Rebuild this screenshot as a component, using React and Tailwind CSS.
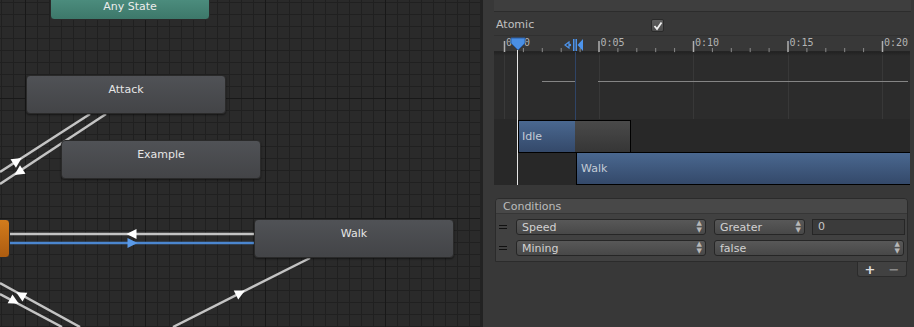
import React from 'react';

const font = { fontFamily: '"DejaVu Sans", "Liberation Sans", sans-serif' };

function arrow(cx, cy, dx, dy, s = 10) {
  const l = Math.hypot(dx, dy);
  const ux = dx / l, uy = dy / l;
  const nx = -uy, ny = ux;
  const tip = [cx + ux * s * 0.55, cy + uy * s * 0.55];
  const b1 = [cx - ux * s * 0.45 + nx * s * 0.5, cy - uy * s * 0.45 + ny * s * 0.5];
  const b2 = [cx - ux * s * 0.45 - nx * s * 0.5, cy - uy * s * 0.45 - ny * s * 0.5];
  return [tip, b1, b2].map((p) => p.join(',')).join(' ');
}

function StateNode({ name, className }) {
  return (
    <div
      className={`absolute w-[200px] h-[39px] rounded-[4px] border border-[#2a2a2a] bg-gradient-to-b from-[#505256] to-[#434447] text-center pt-[6px] text-[11px] text-[#e6e6e6] shadow-[0_1px_2px_rgba(0,0,0,0.5)] ${className}`}
    >
      {name}
    </div>
  );
}

function Canvas() {
  return (
    <div className="relative w-[480px] h-full overflow-hidden bg-[#2a2a2a]">
      {/* grid */}
      <div className="absolute inset-0 [background-image:linear-gradient(to_right,#202020_1px,transparent_1px),linear-gradient(to_bottom,#202020_1px,transparent_1px)] [background-size:12px_12px] [background-position:1px_2px]" />
      <div className="absolute inset-0 [background-image:linear-gradient(to_right,#181818_1px,transparent_1px),linear-gradient(to_bottom,#181818_1px,transparent_1px)] [background-size:120px_120px] [background-position:25px_98px]" />

      {/* transitions */}
      <svg className="absolute inset-0" width="480" height="327">
        <g stroke="#c4c4c4" strokeWidth="2.5" fill="none">
          <line x1="90" y1="114" x2="0" y2="172" />
          <line x1="106" y1="114" x2="0" y2="184" />
          <line x1="10" y1="234" x2="254" y2="234" />
          <line x1="310" y1="258" x2="173" y2="327" />
          <line x1="0" y1="283" x2="80" y2="327" />
          <line x1="0" y1="294" x2="62" y2="327" />
        </g>
        <line x1="10" y1="243" x2="254" y2="243" stroke="#4b86cf" strokeWidth="2.5" />
        <g fill="#ffffff">
          <polygon points={arrow(17, 161, 90, -58)} />
          <polygon points={arrow(19, 172, -106, 70)} />
          <polygon points={arrow(132, 234, -1, 0)} />
          <polygon points={arrow(240, 293, 137, -69)} />
          <polygon points={arrow(21, 295, -80, -44)} />
          <polygon points={arrow(14, 301, 80, 44)} />
        </g>
        <polygon points={arrow(132, 243, 1, 0)} fill="#5a9ae8" />
      </svg>

      {/* nodes */}
      <div className="absolute left-[50px] top-[-20px] w-[160px] h-[40px] rounded-[4px] border border-[#2a2a2a] bg-gradient-to-b from-[#5aa090] to-[#3d786a] text-center pt-[18px] text-[11px] text-[#ececec]">
        Any State
      </div>
      <StateNode name="Attack" className="left-[26px] top-[75px]" />
      <StateNode name="Example" className="left-[61px] top-[140px]" />
      <StateNode name="Walk" className="left-[254px] top-[219px]" />
      <div className="absolute left-[-190px] top-[219px] w-[200px] h-[39px] rounded-[4px] border border-[#2a2a2a] bg-gradient-to-b from-[#d27c1c] to-[#ad5c10]" />
    </div>
  );
}

const ticks = Array.from({ length: 21 }, (_, i) => 10 + i * 18.9);
const labels = ['0:00', '0:05', '0:10', '0:15', '0:20'];

function Timeline() {
  return (
    <div className="relative h-[150px] w-[416px] bg-[#2c2c2c] overflow-hidden">
      {/* ruler */}
      <div className="relative h-[17px] bg-[#383838] border-t border-[#303030] border-b border-b-[#242424]">
        <svg className="absolute inset-0" width="416" height="17">
          {ticks.map((x, i) => (
            <line
              key={i}
              x1={x + 0.5}
              x2={x + 0.5}
              y1={i % 5 === 0 ? 5 : 12}
              y2="17"
              stroke={i % 5 === 0 ? '#b0b0b0' : '#8a8a8a'}
              strokeWidth={i % 5 === 0 ? 1.5 : 1}
            />
          ))}
        </svg>
        {labels.map((t, i) => (
          <span
            key={t}
            className="absolute top-[1px] text-[10px] leading-[12px] text-[#b4b4b4] [font-family:'DejaVu_Sans_Mono',monospace]"
            style={{ left: 12 + i * 94.5 }}
          >
            {t}
          </span>
        ))}
      </div>

      {/* track grid lines */}
      {[0, 1, 2, 3, 4].map((i) => (
        <div
          key={i}
          className="absolute top-[17px] bottom-0 w-px bg-[#383838]"
          style={{ left: 10 + i * 94.5 }}
        />
      ))}
      <div className="absolute left-0 right-0 top-[17px] h-[4px] bg-gradient-to-b from-[#222] to-transparent" />

      {/* curve */}
      <div className="absolute top-[46px] left-[48px] w-[34px] h-px bg-[#858585]" />
      <div className="absolute top-[46px] left-[104px] right-[2px] h-px bg-[#858585]" />

      {/* bars region */}
      <div className="absolute left-0 right-0 top-[84px] bottom-0 bg-[#282828]" />
      <div className="absolute left-[24px] top-[85px] h-[33px] w-[58px] border border-black bg-gradient-to-b from-[#4a6890] to-[#34496a] text-[11px] text-[#c4ccd6] pl-[3px] pt-[8px]">
        Idle
      </div>
      <div className="absolute left-[81px] top-[85px] h-[33px] w-[56px] border border-black border-l-0 bg-gradient-to-b from-[#4a4a4a] to-[#363636]" />
      <div className="absolute left-[82px] top-[117px] h-[33px] right-[-2px] border border-black bg-gradient-to-b from-[#4a6890] to-[#34496a] text-[11px] text-[#c4ccd6] pl-[4px] pt-[8px]">
        Walk
      </div>

      {/* transition marker line */}
      <div className="absolute left-[81px] top-[17px] h-[68px] w-px bg-[#2f4466]" />
      <svg className="absolute left-[70px] top-[3px]" width="20" height="14">
        <path d="M1 7 L5 4 L5 10 Z" fill="none" stroke="#4d94ec" strokeWidth="1.2" />
        <circle cx="6" cy="7" r="1.2" fill="#4d94ec" />
        <rect x="9" y="1" width="1.5" height="12" fill="#4d94ec" />
        <rect x="11.5" y="1" width="1.5" height="12" fill="#4d94ec" />
        <path d="M19 1 L13.5 7 L19 13 Z" fill="#4d94ec" />
      </svg>

      {/* playhead */}
      <div className="absolute left-[23px] top-[8px] bottom-0 w-px bg-[#e6e6e6]" />
      <svg className="absolute left-[16px] top-[2px]" width="16" height="14">
        <path d="M1 1 H15 V6 L8 13 L1 6 Z" fill="#4a8fe4" stroke="#2a5ea6" strokeWidth="1" />
      </svg>
    </div>
  );
}

function Dropdown({ label, className }) {
  return (
    <div
      className={`flex items-center justify-between h-[16px] rounded-[3px] border border-[#262626] bg-gradient-to-b from-[#585858] to-[#484848] pl-[5px] pr-[3px] text-[11px] text-[#d2d2d2] leading-none ${className}`}
    >
      <span>{label}</span>
      <span className="text-[7px] text-[#b8b8b8] leading-none">▲<br />▼</span>
    </div>
  );
}

function Handle() {
  return (
    <div className="w-[20px] flex flex-col gap-[2px] pl-[3px]">
      <div className="w-[8px] h-px bg-[#111]" />
      <div className="w-[8px] h-px bg-[#111]" />
    </div>
  );
}

function Inspector() {
  return (
    <div className="flex-1 h-full bg-[#383838] border-l-[3px] border-[#222] pl-[11px] pr-[4px] text-[11px] text-[#c8c8c8]">
      <div className="h-[12px] bg-[#3e3e3e] border-b border-[#2c2c2c] -mr-[1px]" />
      <div className="h-[23px] flex items-center pl-[2px] pt-[4px]">
        <span className="w-[155px] text-[#c0c0c0]">Atomic</span>
        <div className="w-[13px] h-[13px] rounded-[2px] border border-[#2a2a2a] bg-gradient-to-b from-[#5e5e5e] to-[#4c4c4c] flex items-center justify-center">
          <svg width="10" height="10" viewBox="0 0 10 10">
            <path d="M1.5 5 L4 8 L8.5 1.5" fill="none" stroke="#f0f0f0" strokeWidth="1.8" />
          </svg>
        </div>
      </div>
      <Timeline />
      <div className="h-[13px]" />
      <div className="ml-[1px] w-[413px] rounded-t-[4px] border border-[#2b2b2b] bg-[#414141]">
        <div className="h-[15px] bg-[#484848] rounded-t-[3px] border-b border-[#363636] pl-[7px] leading-[15px] text-[#bcbcbc]">
          Conditions
        </div>
        <div className="flex flex-col gap-[5px] pt-[5px] pb-[5px]">
          <div className="flex items-center">
            <Handle />
            <Dropdown label="Speed" className="w-[190px]" />
            <Dropdown label="Greater" className="w-[91px] ml-[8px]" />
            <div className="ml-[7px] w-[93px] h-[16px] border border-[#262626] bg-[#3b3b3b] pl-[5px] text-[#c8c8c8] leading-[14px]">
              0
            </div>
          </div>
          <div className="flex items-center">
            <Handle />
            <Dropdown label="Mining" className="w-[190px]" />
            <Dropdown label="false" className="w-[190px] ml-[8px]" />
          </div>
        </div>
      </div>
      <div className="flex justify-end w-[414px]">
        <div className="w-[50px] h-[15px] mr-[1px] rounded-b-[3px] border border-t-0 border-[#2b2b2b] bg-[#414141] flex items-center justify-around text-[13px] font-bold leading-none">
          <span className="text-[#e0e0e0]">+</span>
          <span className="text-[#8a8a8a]">−</span>
        </div>
      </div>
    </div>
  );
}

export default function App() {
  return (
    <div className="flex w-[914px] h-[327px] overflow-hidden" style={font}>
      <Canvas />
      <Inspector />
    </div>
  );
}
